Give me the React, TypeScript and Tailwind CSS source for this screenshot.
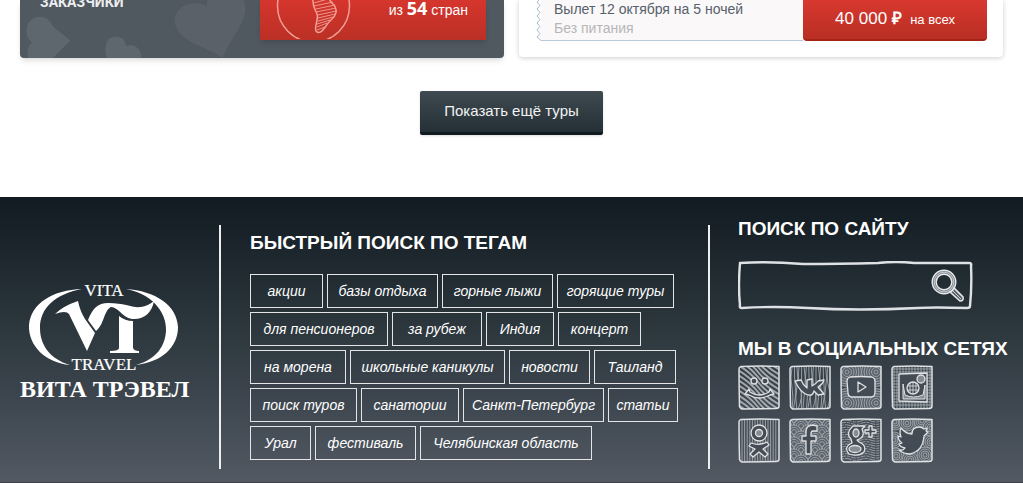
import React from "react";

const tags: [string, string][] = [
  ["акции", "w-[73px]"],
  ["базы отдыха", "w-[111px]"],
  ["горные лыжи", "w-[111px]"],
  ["горящие туры", "w-[117px]"],
  ["для пенсионеров", "w-[138px]"],
  ["за рубеж", "w-[90px]"],
  ["Индия", "w-[68px]"],
  ["концерт", "w-[83px]"],
  ["на морена", "w-[96px]"],
  ["школьные каникулы", "w-[155px]"],
  ["новости", "w-[81px]"],
  ["Таиланд", "w-[82px]"],
  ["поиск туров", "w-[107px]"],
  ["санатории", "w-[98px]"],
  ["Санкт-Петербург", "w-[141px]"],
  ["статьи", "w-[70px]"],
  ["Урал", "w-[61px]"],
  ["фестиваль", "w-[101px]"],
  ["Челябинская область", "w-[172px]"],
];

function Hearts() {
  return (
    <svg className="absolute bottom-0 left-0" width="238" height="58" viewBox="0 0 238 58" fill="#fff" aria-hidden="true">
      <path d="M50 41L33 58H8Q6 48 12 42C4 37 4 20 17 17C25 16 30 20 32 25C36 30 44 34 50 41Z" opacity=".09" />
      <path d="M87 58C84 50 85 38 94 37C102 36 105 40 106 46C114 43 122 48 121 58Z" opacity=".09" />
      <path d="M202 58C192 48 160 44 155 24C152 8 170-2 187 6C186-12 206-18 218-8C232 6 224 20 213 38Q207 48 202 58Z" opacity=".06" />
    </svg>
  );
}

function Globe() {
  return (
    <svg className="shrink-0" width="76" height="39" viewBox="0 0 76 39" fill="none" stroke="#f2a096" aria-hidden="true">
      <circle cx="37.500" cy="6" r="36" strokeWidth="1.500" />
      <path d="M37-2C36 6 39 9 41 14C43 20 38 26 40 31C45 37 50 24 55 20C60 16 62 10 58 5C54 2 53-1 52-4" strokeWidth="1.500" />
      <path d="M38 3L52-1M38 6L57 2M40 9L59 5M40 12L60 8M42 15L60 11M42 18L59 14M42 21L57 17M41 24L54 20M41 27L51 23M41 30L49 27" strokeWidth=".9" />
    </svg>
  );
}

function Logo() {
  return (
    <svg className="block" width="150" height="98" viewBox="0 -6 150 98" fill="#fff" role="img" aria-label="Vita Travel">
      <path d="M54 6C25 7 3 20 1 42C0 63 18 80 42 82C22 76 12 62 12 45C12 25 27 11 54 6Z" />
      <path d="M98 6C127 8 149 22 150 44C150 64 134 79 108 82C129 76 137 63 138 48C139 28 122 10 98 6Z" />
      <path d="M27 31Q35 23 50 18Q52 28 57 36L67 50L59 68L41 31Q38 27 27 31Z" />
      <path d="M60 37C65 25 70 20 80 20C98 20 103 25 113 24Q120 23 126 18C124 29 117 36 106 36C95 36 92 25 83 24C76 27 76 42 68 48Z" />
      <path d="M91 33Q97 38 105 38V65Q106 68 111 68V70H82V68Q91 68 91 65Z" />
      <text x="76" y="13" textAnchor="middle" fontFamily="Liberation Serif, serif" fontSize="17" stroke="#fff" strokeWidth=".2">VITA</text>
      <text x="76" y="87" textAnchor="middle" fontFamily="Liberation Serif, serif" fontSize="17" stroke="#fff" strokeWidth=".2">TRAVEL</text>
    </svg>
  );
}

const frame = "M3 1.500Q22 .5 41 1.500Q41 21 41 41Q41 43.500 38 43.500L4 44Q1 43 1.500 40Q1 20 1 4Q1 2 3 1.500Z";

const symbols = {
  smile: (
    <>
      <circle cx="16" cy="16" r="3" />
      <circle cx="27" cy="16" r="3" />
      <path d="M7 29L11 24L12 27Q21 33 31 27L32 24L36 29L32 30Q21 36 11 30Z" />
    </>
  ),
  vk: <path d="M6 16L12 15Q14 20 18 23V15L23 14V21Q27 19 29 16L35 15Q34 19 29 22L35 29L29 30L25 26Q24 31 19 30C13 28 9 23 6 16Z" />,
  youtube: (
    <>
      <path d="M10 12Q21 11 32 12Q35 13 35 16V27Q35 32 31 32H11Q8 31 8 28L7 16Q7 13 10 12Z" />
      <path d="M18 17L26 22L18 27Z" />
    </>
  ),
  instagram: (
    <>
      <path d="M8 9L36 8V37L8 36Z" />
      <circle cx="30" cy="14" r="4" fill="#858c94" />
      <path d="M12 19L14 30Q22 34 32 30L34 20V34H12Z" fill="#858c94" strokeWidth="1" />
      <circle cx="22" cy="23" r="6" />
      <path d="M19 18V28M22 17V29M25 18V28M16 21H28M16 25H28" strokeWidth=".8" />
    </>
  ),
  ok: (
    <>
      <circle cx="21" cy="15" r="8" />
      <circle cx="21" cy="15" r="3.500" fill="#858c94" />
      <path d="M13 25Q21 28 29 24L31 27L25 31L30 36L27 39L21 34L15 39L12 36L17 31L11 28Z" />
    </>
  ),
  facebook: <path d="M28 8V13H24Q22 13 22 16V18H27V23H22V36H17V23H13V18H17V14Q17 7 24 7Z" />,
  google: (
    <>
      <path d="M13 8H25L22 11Q26 19 17 22L19 24Q27 27 24 34Q18 39 9 36Q3 29 12 25L11 21Q5 15 13 8Z" />
      <ellipse cx="16" cy="15" rx="3" ry="4" fill="#858c94" />
      <ellipse cx="15" cy="31" rx="6" ry="3.500" fill="#858c94" />
      <path d="M29 8H32V12H36V15H32V19H29V15H25V12H29Z" />
    </>
  ),
  twitter: <path d="M10 10Q15 16 21 16Q21 9 28 9Q31 9 33 11L36 10L35 13L37 14L33 18Q32 33 19 36Q13 36 8 32Q12 33 14 30Q9 29 8 26L11 25Q7 22 7 18L10 19Q8 14 10 10Z" />,
};

type SymbolName = keyof typeof symbols;

function range(from: number, to: number, step: number) {
  const values: number[] = [];
  for (let v = from; v <= to; v += step) values.push(v);
  return values;
}

function rings(centres: [number, number][], radii: number[]) {
  return centres.map(([cx, cy]) =>
    radii.map((r, i) => <circle key={`${cx}-${cy}-${r}`} cx={cx} cy={cy} r={r} fill={i === 0 ? "#59616a" : "none"} />)
  );
}

const scales: [number, number][] = range(2, 47, 6).flatMap((y, row) =>
  range(row % 2 ? -2 : 5, 48, 14).map((x): [number, number] => [x, y])
);

const textures: Record<SymbolName, React.ReactNode> = {
  smile: (
    <g strokeWidth="2">
      {range(-40, 40, 5).map((y) => (
        <path key={y} d={`M0 ${y}Q12 ${y + 7} 20 ${y + 17}T42 ${y + 35}`} />
      ))}
    </g>
  ),
  vk: range(3, 40, 2.4).map((x, i) => (
    <path key={x} d={`M${x} 1Q${x + (i % 3) * 2 - 2} 14 ${x + (i % 2)} 23T${x - (i % 2)} 44`} />
  )),
  youtube: rings([[7, 7], [36, 7], [7, 38], [36, 38]], [14.5, 12, 9.5, 7, 4.5, 2]),
  instagram: (
    <>
      {range(3, 40, 3).map((x) => <path key={`v${x}`} d={`M${x} 1V44`} />)}
      {range(4, 42, 3).map((y) => <path key={`h${y}`} d={`M1 ${y}H41`} />)}
    </>
  ),
  ok: range(4, 40, 2.6).map((x) => <path key={x} d={`M${x} 1V44`} />),
  facebook: rings(scales, [7, 4.7, 2.4]),
  google: range(3, 43, 2.4).map((y, i) => (
    <path key={y} strokeDasharray={i % 2 ? "5 1 3 1" : "3 1 7 1"} d={`M1 ${y}Q6 ${y - 2} 11 ${y}T21 ${y}T31 ${y}T41 ${y}`} />
  )),
  twitter: rings([[22, 22], [3, 22], [40, 24], [4, 4], [16, 5], [31, 3], [40, 10], [5, 38], [19, 42], [34, 37]], [8, 6, 4, 2]),
};

const socials: { name: SymbolName; label: string }[] = [
  { name: "smile", label: "Мой мир" },
  { name: "vk", label: "ВКонтакте" },
  { name: "youtube", label: "YouTube" },
  { name: "instagram", label: "Instagram" },
  { name: "ok", label: "Одноклассники" },
  { name: "facebook", label: "Facebook" },
  { name: "google", label: "Google+" },
  { name: "twitter", label: "Twitter" },
];

function SocialIcon({ name }: { name: SymbolName }) {
  return (
    <svg className="block" width="42" height="45" viewBox="0 0 42 45" fill="none" stroke="#dfe2e4" strokeLinejoin="round" aria-hidden="true">
      <clipPath id={`clip-${name}`}>
        <path d={frame} />
      </clipPath>
      <g clipPath={`url(#clip-${name})`} stroke="#a3a9af" strokeWidth=".9">{textures[name]}</g>
      <g fill="#434b54" strokeWidth="1.300">{symbols[name]}</g>
      <path d={frame} strokeWidth="1.500" />
    </svg>
  );
}

function SearchBox() {
  return (
    <form className="relative mt-5 h-[50px] w-[235px]" onSubmit={(e) => e.preventDefault()}>
      <svg className="pointer-events-none absolute inset-0" width="235" height="50" viewBox="0 0 235 50" fill="none" stroke="#dfe2e4" aria-hidden="true">
        <path d="M2 2Q30 0 65 3Q100 3 140 2Q158 0 176 2H231Q234 2 233 5Q234 26 232 45Q232 47 229 47Q195 46 180 47Q120 50 70 47Q35 45 4 47Q1 47 2 44Q0 25 2 2Z" strokeWidth="2.400" />
      </svg>
      <input type="search" aria-label="Поиск по сайту" className="h-full w-full bg-transparent pl-3 pr-12 text-base text-white outline-none" />
      <button type="submit" aria-label="Найти" className="absolute right-2 top-2">
        <svg className="block" width="34" height="34" viewBox="0 0 34 34" fill="none" stroke="#e8eaeb" aria-hidden="true">
          <circle cx="13" cy="13" r="9.800" stroke="#7d858b" strokeWidth="4" />
          <circle cx="13" cy="13" r="11.800" strokeWidth="1.400" />
          <circle cx="13" cy="13" r="9.800" strokeWidth=".7" />
          <circle cx="13" cy="13" r="7.800" strokeWidth="1.400" />
          <path d="M19 23Q22 22 23 19L32 28Q33 32 29 32Z" fill="#59626a" strokeWidth="1.500" />
          <path d="M22 22L30 30" strokeWidth=".8" />
        </svg>
      </button>
    </form>
  );
}

export default function App() {
  return (
    <div className="overflow-hidden bg-white font-['Liberation_Sans',Arial,sans-serif]">
      <main className="px-5">
        <div className="grid grid-cols-2 items-start gap-[15px]">
          <article className="relative flex h-[58px] items-start justify-between overflow-hidden rounded-b-sm bg-[#505860] pl-5 pr-[18px] shadow-md">
            <Hearts />
            <p className="relative -mt-2 font-['Roboto',sans-serif] text-[14px] font-bold leading-5 text-[#eceeef]">ЗАКАЗЧИКИ</p>
            <div className="relative flex h-10 w-[226px] justify-between bg-linear-to-b from-[#d5352d] to-[#bb3025] pl-4 pr-[18px] text-[14px] text-white shadow-md">
              <Globe />
              <p className="-mt-1 leading-6">
                из <b className="font-['Open_Sans',sans-serif] text-lg leading-6">54</b> стран
              </p>
            </div>
          </article>
          <article className="h-[57px] rounded-b-sm bg-white pl-[17px] pr-4 shadow-[0_1px_5px_rgba(0,0,0,0.2)]">
            <div className="flex h-[41px] justify-between">
              <svg className="shrink-0" width="5" height="41" viewBox="0 0 5 41" fill="#faf8f9" stroke="#a9bdd0" aria-hidden="true">
                <path d="M5 40.500L1 37L4 33.500L1 30L4 26.500L1 23L4 19.500L1 16L4 12.500L1 9L4 5.500L1 2L3 0" />
              </svg>
              <div className="flex-1 border-b border-[#b9c9d9] bg-[#faf8f9] pl-[13px] text-[14px] leading-[19px] text-[#56616b]">
                <p>Вылет 12 октября на 5 ночей</p>
                <p className="text-[#b7b7b7]">Без питания</p>
              </div>
              <button type="button" className="w-[184px] rounded-b-sm border-b-2 border-[#a62318] bg-linear-to-b from-[#d8382f] to-[#b92e23] text-[17px] leading-6 text-white">
                40 000 <b>₽</b> <span className="text-[13px]">&nbsp;на всех</span>
              </button>
            </div>
          </article>
        </div>
        <div className="flex justify-center pb-[62px] pt-[33px]">
          <button type="button" className="h-11 rounded-xs border-b-3 border-[#101c22] bg-linear-to-b from-[#3f4b51] to-[#253036] px-6 text-[15px] text-[#f1f2f2] shadow">
            Показать ещё туры
          </button>
        </div>
      </main>

      <footer className="flex border-b border-[#3d424a] bg-linear-to-b from-[#111b21] via-[#2f3940] to-[#525963] px-5 pb-[13px] pt-5 text-white">
        <a href="#home" className="mt-[60px] flex w-[199px] flex-col text-white">
          <span className="pl-2"><Logo /></span>
          <span className="font-['Liberation_Serif',serif] text-[24px] font-bold leading-7">ВИТА ТРЭВЕЛ</span>
        </a>
        <section className="mt-2 flex-1 border-x-2 border-[#eceeef] pb-[9px] pl-[29px]">
          <h2 className="pt-1 text-[19px] font-bold leading-7">БЫСТРЫЙ ПОИСК ПО ТЕГАМ</h2>
          <nav className="mt-[17px] flex max-w-[432px] flex-wrap gap-1" aria-label="Теги">
            {tags.map(([label, width]) => (
              <a key={label} href="#tag" className={`${width} h-[34px] whitespace-nowrap border border-[#e3e5e7] text-center text-[14px] italic leading-8`}>
                {label}
              </a>
            ))}
          </nav>
        </section>
        <section className="w-[293px] pl-7">
          <h2 className="whitespace-nowrap text-[19px] font-bold leading-6">ПОИСК ПО САЙТУ</h2>
          <SearchBox />
          <h2 className="mt-6 whitespace-nowrap text-[19px] font-bold leading-7">МЫ В СОЦИАЛЬНЫХ СЕТЯХ</h2>
          <nav className="mt-[2px] grid w-fit grid-cols-4 gap-x-[9px] gap-y-2" aria-label="Социальные сети">
            {socials.map(({ name, label }) => (
              <a key={name} href="#social" aria-label={label}>
                <SocialIcon name={name} />
              </a>
            ))}
          </nav>
        </section>
      </footer>
    </div>
  );
}
